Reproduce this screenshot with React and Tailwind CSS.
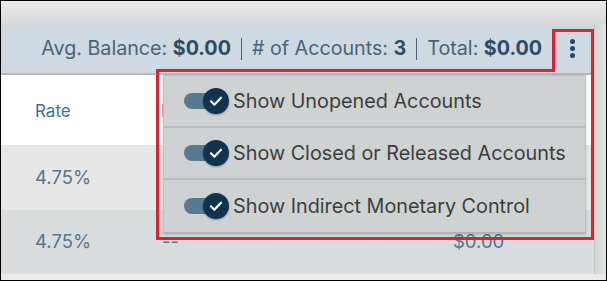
import React from 'react';

const font = { fontFamily: 'Inter, "Noto Sans", sans-serif' };

// switch shown "on" in the options menu
const Toggle = () => (
  <div className="relative w-[46px] h-[26px] shrink-0">
    <div className="absolute left-0 top-[5px] w-[36px] h-[16px] rounded-full bg-[#587a90]" />
    <div className="absolute left-[19px] top-0 w-[26px] h-[26px] rounded-full bg-[#0f3450] shadow-[0_1px_2px_rgba(0,0,0,0.35)] flex items-center justify-center">
      <svg width="16" height="16" viewBox="0 0 24 24" fill="none" stroke="#fff" strokeWidth="3.2" strokeLinecap="round" strokeLinejoin="round">
        <path d="M4.5 12.5l5 5L19.5 7" />
      </svg>
    </div>
  </div>
);

const MenuItem = ({ label, last }) => (
  <div className={`h-[52px] flex items-center pl-[20px] gap-[3px] ${last ? '' : 'border-b-2 border-[#b9bcbe]'}`}>
    <Toggle />
    <span className="text-[19.8px] text-[#3d3d3d] leading-none pt-[2px]">{label}</span>
  </div>
);

const Summary = ({ label, value }) => (
  <span className="text-[19.7px] text-[#49647a]">
    {label} <span className="font-bold text-[#2d4c64]">{value}</span>
  </span>
);

const Sep = () => <span className="w-[1px] h-[22px] bg-[#4e5f7a] mx-[10px]" />;

export default function App() {
  return (
    <div className="relative w-[607px] h-[281px] border border-black overflow-hidden bg-[#e9eaea]" style={font}>
      <div className="h-[23px] bg-gradient-to-b from-[#e8e9e8] to-[#d8d9d8]" />
      <div className="flex">
        <div className="w-[593px]">
          {/* summary bar */}
          <div className="h-[51px] bg-[#cfd9e1] border-b-2 border-[#b4b9bd] flex items-center justify-end">
            <Summary label="Avg. Balance:" value="$0.00" />
            <Sep />
            <Summary label="# of Accounts:" value="3" />
            <Sep />
            <Summary label="Total:" value="$0.00" />
            <button className="w-[44px] ml-[8px] h-full flex flex-col items-center justify-center gap-[2px]">
              <span className="w-[5px] h-[5px] rounded-full bg-[#1d4a6a]" />
              <span className="w-[5px] h-[5px] rounded-full bg-[#1d4a6a]" />
              <span className="w-[5px] h-[5px] rounded-full bg-[#1d4a6a]" />
            </button>
          </div>
          {/* table */}
          <div className="h-[70px] bg-white flex items-center text-[17px] text-[#3f6f99] pt-[3px]">
            <span className="pl-[34px] w-[160px]">Rate</span>
            <span>Balance</span>
          </div>
          <div className="h-[65px] bg-[#e6e7e6] flex items-center text-[18.5px] text-[#557591]">
            <span className="pl-[34px] w-[161px]">4.75%</span>
            <span className="w-[290px]">--</span>
            <span>$0.00</span>
          </div>
          <div className="h-[64px] bg-[#d9dcdd] flex items-center text-[18.5px] text-[#557591]">
            <span className="pl-[34px] w-[161px]">4.75%</span>
            <span className="w-[291px]">--</span>
            <span>$0.00</span>
          </div>
        </div>
        <div className="flex-1 border-l border-[#c4c6c7] bg-gradient-to-r from-[#d4d6d6] to-[#e2e3e3]" />
      </div>

      {/* options menu */}
      <div className="absolute left-[162px] top-[74px] w-[423px] bg-[#cfd2d3] border border-[#bdc0c2] border-b-2 border-b-[#b3b6b8] shadow-[0_1px_3px_rgba(0,0,0,0.15)]">
        <MenuItem label="Show Unopened Accounts" />
        <MenuItem label="Show Closed or Released Accounts" />
        <MenuItem label="Show Indirect Monetary Control" last />
      </div>

      {/* red callout */}
      <svg className="absolute left-[-1px] top-[-1px]" width="607" height="281" fill="none">
        <path d="M157.5 70.5H553.5V30.5H592.5V238.5H157.5Z" stroke="#e4202a" strokeWidth="3" />
      </svg>
    </div>
  );
}
